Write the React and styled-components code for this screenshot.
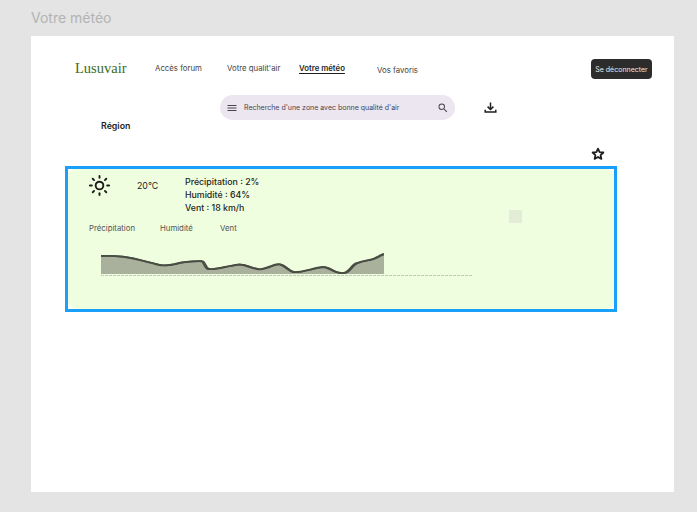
import styled, { createGlobalStyle } from "styled-components";
import { Sun } from "lucide-react";
import { MdMenu, MdSearch } from "react-icons/md";

const GlobalStyle = createGlobalStyle`
  html, body {
    margin: 0;
    padding: 0;
    background: #e4e4e4;
  }
  body {
    font-family: Inter, "Liberation Sans", sans-serif;
  }
`;

const Page = styled.div`
  width: 697px;
  height: 512px;
  overflow: hidden;
  padding: 10px 23px 20px 31px;
  box-sizing: border-box;
  display: flex;
  flex-direction: column;
`;

const PageTitle = styled.div`
  height: 26px;
  font-size: 14px;
  line-height: 16px;
  color: #b3b3b3;
`;

const Frame = styled.main`
  flex: 1;
  background: #fff;
  padding: 23px 22px 0 34px;
  display: flex;
  flex-direction: column;
`;

const Header = styled.header`
  display: flex;
  align-items: center;
  height: 20px;
  padding-left: 10px;
`;

const Logo = styled.div`
  width: 80px;
  font-family: "Liberation Serif", serif;
  font-size: 14.5px;
  color: #3a6b1a;
  padding-bottom: 2px;
`;

const NavLink = styled.a`
  width: ${(p) => p.$width}px;
  font-size: 7.8px;
  color: ${(p) => (p.$active ? "#1e1e1e" : "#444")};
  font-weight: ${(p) => (p.$active ? 600 : 400)};
  white-space: nowrap;
  padding-bottom: ${(p) => (p.$low ? 0 : 3)}px;
  padding-top: ${(p) => (p.$low ? 2 : 0)}px;

  span {
    text-decoration: ${(p) => (p.$active ? "underline" : "none")};
    text-underline-offset: 1.5px;
  }
`;

const LogoutButton = styled.button`
  margin-left: auto;
  width: 61px;
  height: 20px;
  padding: 0;
  border: none;
  border-radius: 4px;
  background: #2c2c2c;
  color: #e8e8e8;
  font-family: inherit;
  font-size: 7px;
`;

const SearchRow = styled.div`
  display: flex;
  align-items: center;
  margin-top: 16px;
  padding-left: 155px;
`;

const SearchBar = styled.div`
  width: 235px;
  height: 25px;
  box-sizing: border-box;
  border-radius: 12.5px;
  background: #ece6f0;
  display: flex;
  align-items: center;
  padding: 0 6px;
  color: #49454f;
`;

const SearchText = styled.span`
  flex: 1;
  margin-left: 6px;
  font-size: 7px;
  white-space: nowrap;
`;

const DownloadButton = styled.div`
  margin-left: 29px;
  display: flex;
  color: #1e1e1e;
`;

const RegionLabel = styled.div`
  margin: 0 0 0 36px;
  height: 12px;
  font-size: 8.8px;
  line-height: 12px;
  font-weight: 600;
  color: #1e1e1e;
`;

const StarRow = styled.div`
  display: flex;
  justify-content: flex-end;
  padding-right: 47px;
  margin-top: 15px;
  height: 19px;
  color: #1e1e1e;
`;

const CardOutline = styled.section`
  width: 552px;
  height: 146px;
  box-sizing: border-box;
  border: 3px solid #18a0fb;
  background: #fff;
`;

const Card = styled.div`
  height: 100%;
  box-sizing: border-box;
  position: relative;
  background: #effedf;
  border-radius: 8px;
  padding: 6px 0 0 20px;
`;

const Summary = styled.div`
  display: flex;
  align-items: flex-start;
  height: 41px;
`;

const SunWrap = styled.div`
  width: 49px;
  display: flex;
  color: #1e1e1e;
  margin-top: -1px;
`;

const Temp = styled.div`
  width: 48px;
  padding-top: 5px;
  font-size: 8.8px;
  line-height: 12px;
  color: #1e1e1e;
`;

const Stats = styled.div`
  font-size: 8.8px;
  font-weight: 500;
  line-height: 13px;
  color: #1e1e1e;
`;

const Tabs = styled.div`
  display: flex;
  margin-top: 6px;
  padding-left: 1px;
`;

const Tab = styled.div`
  width: ${(p) => p.$width}px;
  font-size: 7.8px;
  line-height: 12px;
  color: #555;
`;

const Chart = styled.svg`
  display: block;
  margin: 16px 0 0 13px;
`;

const Placeholder = styled.div`
  position: absolute;
  left: 441px;
  top: 41px;
  width: 13px;
  height: 13px;
  background: #e2ecd6;
  border-radius: 1px;
`;

// chart coordinates start at the top left of the plot: x - 101, y - 250
const curve =
  "M0 6 C8 5.6 15 6 22 6.8 C32 8 42 11 56 14.5 C62 16 68 15.5 74 14 C84 11.2 90 11 100.5 11.2 C103 11.5 103 18 107 19 C113 20 125 16 137 14.6 C143 14 149 18 157 19.3 C163 20 170 15 177 14.3 C183 14 186 21 192 22 C200 23 212 18 222 17 C228 17 232 23 240 23 C248 24.5 250 14 256 13 C262 10 270 11 276 7 C279 5.5 281 4.5 283 4";

const DownloadIcon = () => (
  <svg width="13" height="13" viewBox="0 0 13 13" fill="none" stroke="currentColor" strokeWidth="1.5">
    <path d="M6.5 1.5 V8.2" />
    <path d="M3.6 5.6 L6.5 8.5 L9.4 5.6" />
    <path d="M1.2 8.8 V11 H11.8 V8.8" />
  </svg>
);

const StarIcon = () => (
  <svg width="14" height="14" viewBox="0 0 14 14" fill="none" stroke="currentColor" strokeWidth="1.8" strokeLinejoin="round">
    <path d="M7 1.6 L8.6 5.1 L12.4 5.5 L9.6 8.1 L10.4 11.9 L7 10 L3.6 11.9 L4.4 8.1 L1.6 5.5 L5.4 5.1 Z" />
  </svg>
);

const App = () => {
  return (
    <Page>
      <GlobalStyle />
      <PageTitle>Votre météo</PageTitle>
      <Frame>
        <Header>
          <Logo>Lusuvair</Logo>
          <NavLink $width={72}><span>Accès forum</span></NavLink>
          <NavLink $width={72}><span>Votre qualit'air</span></NavLink>
          <NavLink $width={78} $active><span>Votre météo</span></NavLink>
          <NavLink $width={100} $low><span>Vos favoris</span></NavLink>
          <LogoutButton>Se déconnecter</LogoutButton>
        </Header>
        <SearchRow>
          <SearchBar>
            <MdMenu size={12} />
            <SearchText>Recherche d'une zone avec bonne qualité d'air</SearchText>
            <MdSearch size={12} />
          </SearchBar>
          <DownloadButton>
            <DownloadIcon />
          </DownloadButton>
        </SearchRow>
        <RegionLabel>Région</RegionLabel>
        <StarRow>
          <StarIcon />
        </StarRow>
        <CardOutline>
          <Card>
            <Summary>
              <SunWrap>
                <Sun size={23} strokeWidth={2} />
              </SunWrap>
              <Temp>20°C</Temp>
              <Stats>
                <div>Précipitation : 2%</div>
                <div>Humidité : 64%</div>
                <div>Vent : 18 km/h</div>
              </Stats>
            </Summary>
            <Tabs>
              <Tab $width={71}>Précipitation</Tab>
              <Tab $width={60}>Humidité</Tab>
              <Tab $width={40}>Vent</Tab>
            </Tabs>
            <Chart width="373" height="28" viewBox="0 0 373 28">
              <clipPath id="plot"><rect x="0" y="0" width="283" height="28" /></clipPath>
              <path d={`${curve} L283 24 L0 24 Z`} fill="#a9b09c" />
              <g clipPath="url(#plot)">
                <path d={curve} fill="none" stroke="#4a4d44" strokeWidth="1.9" />
                <path d={curve} fill="none" stroke="#4a4d44" strokeWidth="1.6" transform="translate(1.5 0)" />
              </g>
              <line x1="0" y1="25.5" x2="372" y2="25.5" stroke="#c2cab8" strokeWidth="1" strokeDasharray="3 1" />
            </Chart>
            <Placeholder />
          </Card>
        </CardOutline>
      </Frame>
    </Page>
  );
};

export default App;
